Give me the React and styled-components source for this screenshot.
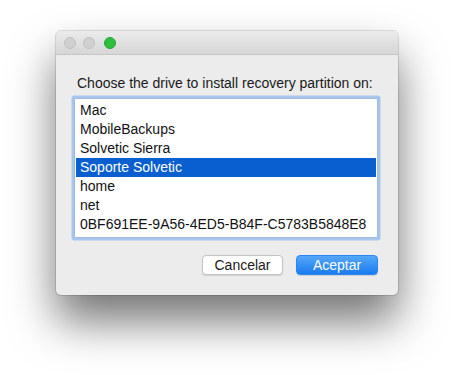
import React from 'react';
import styled, { createGlobalStyle } from 'styled-components';

const GlobalStyle = createGlobalStyle`
  html, body {
    margin: 0;
    padding: 0;
    background: #ffffff;
  }
  body {
    font-family: "Liberation Sans", Arial, sans-serif;
  }
`;

const Stage = styled.div`
  width: 454px;
  height: 375px;
  padding: 31px 0 0 56px;
  box-sizing: border-box;
  overflow: hidden;
`;

const Window = styled.div`
  width: 342px;
  height: 264px;
  background: #ececec;
  border-radius: 5px;
  box-shadow: 0 0 0 1px rgba(0, 0, 0, 0.12), 0 26px 45px rgba(0, 0, 0, 0.55);
  display: flex;
  flex-direction: column;
  overflow: hidden;
`;

const TitleBar = styled.div`
  height: 23px;
  flex: none;
  display: flex;
  align-items: center;
  gap: 7px;
  padding-left: 8px;
  background: linear-gradient(#ebebeb, #d6d6d6);
  border-bottom: 1px solid #c6c6c6;
`;

const Light = styled.span`
  width: 12px;
  height: 12px;
  border-radius: 50%;
  box-sizing: border-box;
  margin-left: ${p => (p.$active ? '2px' : '0')};
  background: ${p => (p.$active ? '#2fc13e' : '#d0d0d0')};
  border: 1px solid ${p => (p.$active ? '#27a234' : '#c0c0c0')};
`;

const Body = styled.div`
  flex: 1;
  display: flex;
  flex-direction: column;
  padding: 20px 20px 0 17px;
`;

const Prompt = styled.div`
  font-size: 14px;
  color: #1a1a1a;
  margin-left: 4px;
  height: 17px;
`;

const ListBox = styled.div`
  margin-top: 6px;
  margin-left: 1px;
  width: 300px;
  height: 134px;
  background: #fff;
  border: 1px solid #9fb9dc;
  box-shadow: 0 0 0 2.5px #a7c6ee;
  border-radius: 1px;
  padding: 2px 1px;
  box-sizing: content-box;
  display: flex;
  flex-direction: column;
`;

const Row = styled.div`
  height: 19px;
  line-height: 19px;
  padding-left: 4px;
  font-size: 14px;
  color: ${p => (p.$selected ? '#ffffff' : '#111')};
  background: ${p => (p.$selected ? '#0a5fd0' : 'transparent')};
  white-space: nowrap;
`;

const Actions = styled.div`
  display: flex;
  justify-content: flex-end;
  gap: 13px;
  margin-top: 17px;
`;

const Button = styled.button`
  width: ${p => p.$w}px;
  height: 20px;
  padding: 0;
  font-family: "Liberation Sans", Arial, sans-serif;
  font-size: 14px;
  border-radius: 4px;
  cursor: default;
  color: ${p => (p.$primary ? '#ffffff' : '#1a1a1a')};
  background: ${p => (p.$primary ? 'linear-gradient(#55a7f8, #1a7cf0)' : '#ffffff')};
  border: 1px solid ${p => (p.$primary ? '#2a86ee' : '#c3c3c3')};
  box-shadow: 0 1px 1px rgba(0, 0, 0, 0.12);
`;

const drives = [
  'Mac',
  'MobileBackups',
  'Solvetic Sierra',
  'Soporte Solvetic',
  'home',
  'net',
  '0BF691EE-9A56-4ED5-B84F-C5783B5848E8',
];

export default function App() {
  return (
    <>
      <GlobalStyle />
      <Stage>
        <Window>
          <TitleBar>
            <Light />
            <Light />
            <Light $active />
          </TitleBar>
          <Body>
            <Prompt>Choose the drive to install recovery partition on:</Prompt>
            <ListBox>
              {drives.map(d => (
                <Row key={d} $selected={d === 'Soporte Solvetic'}>{d}</Row>
              ))}
            </ListBox>
            <Actions>
              <Button $w={81}>Cancelar</Button>
              <Button $w={82} $primary>Aceptar</Button>
            </Actions>
          </Body>
        </Window>
      </Stage>
    </>
  );
}
